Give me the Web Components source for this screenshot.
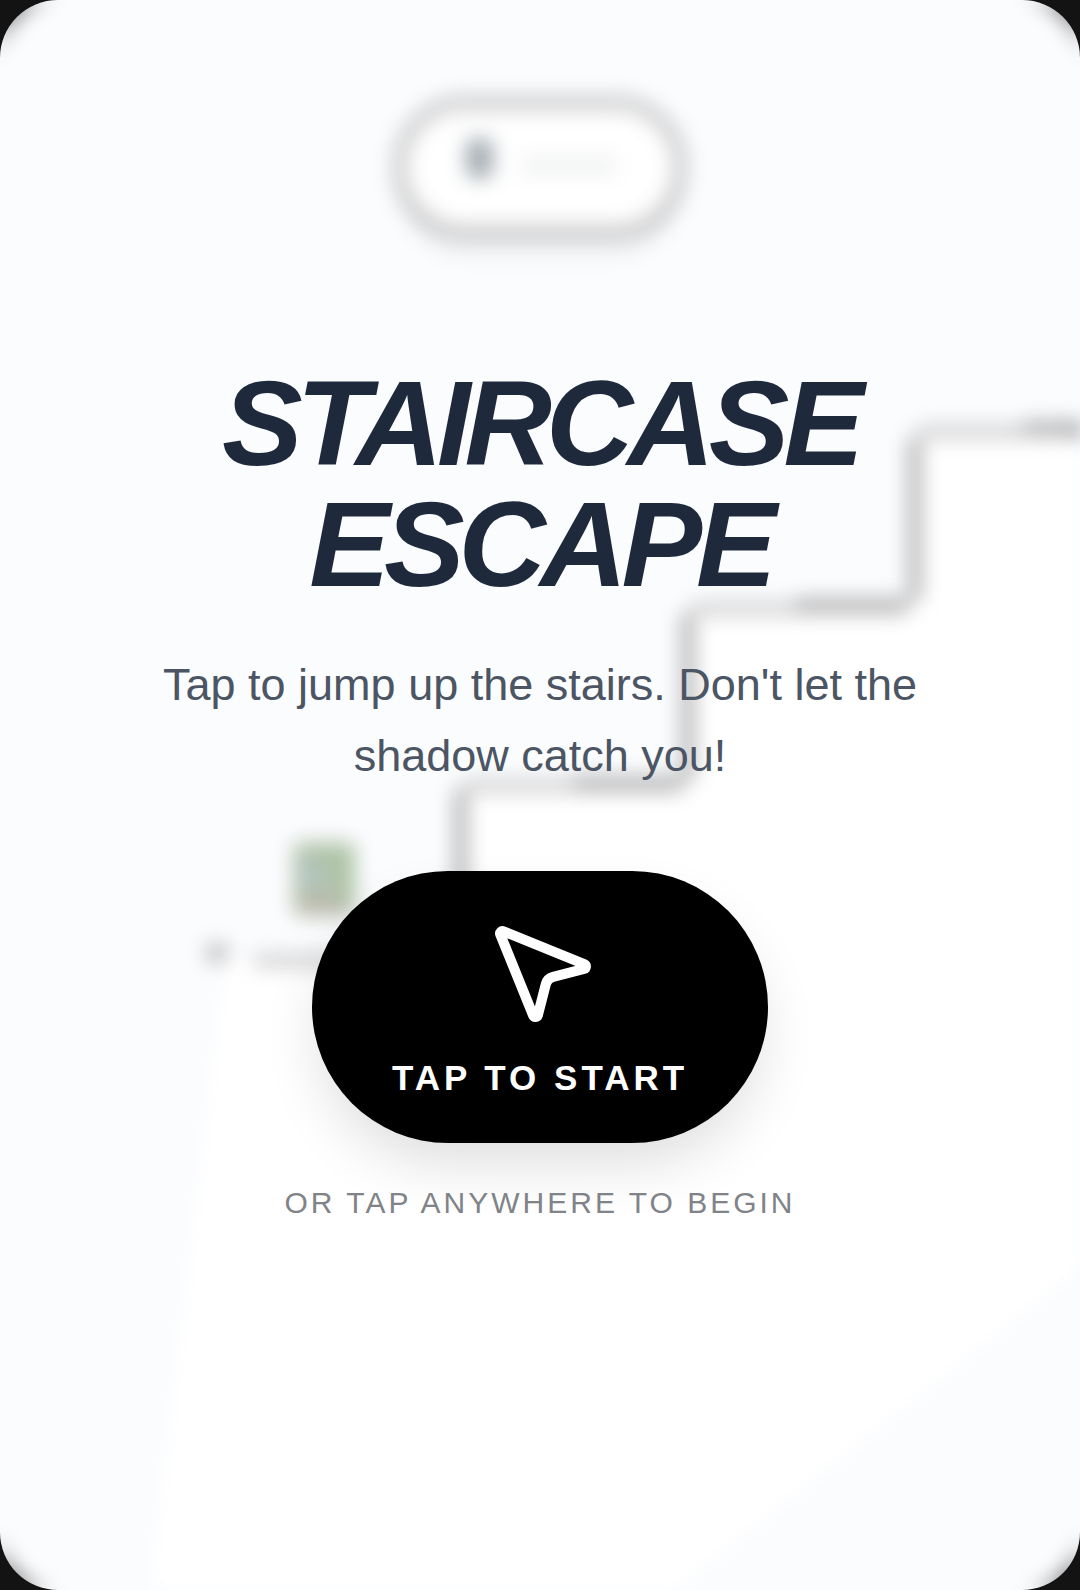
<!DOCTYPE html>
<html lang="en">
<head>
<meta charset="utf-8">
<meta name="viewport" content="width=device-width, initial-scale=1">
<title>Staircase Escape</title>
<style>
html, body {
    margin: 0;
    min-height: 100%;
    background: #131313;
    font-family: "Liberation Sans", Arial, sans-serif;
}
</style>
</head>
<body>

<stair-game>
    <stair-scene slot="scene"></stair-scene>
    <start-screen>
        <span slot="title">Staircase Escape</span>
        <span slot="text">Tap to jump up the stairs. Don't let the shadow catch you!</span>
        <start-button slot="action">Tap to start</start-button>
        <span slot="hint">Or tap anywhere to begin</span>
    </start-screen>
</stair-game>

<script>
// rounded game frame, the scene lies behind the default slot
customElements.define('stair-game', class extends HTMLElement {
    constructor() {
        super();
        let shadowRoot = this.attachShadow({ mode: 'open' });
        shadowRoot.innerHTML = `
        <style>
        :host {
            position: relative;
            display: grid;
            min-height: 100vh;
            overflow: hidden;
            border-radius: 58px;
            background: #fbfcfe;
        }
        #scene {
            position: absolute;
            inset: 0;
        }
        main {
            position: relative;
            display: grid;
        }
        </style>
        <div id=scene><slot name=scene></slot></div>
        <main><slot></slot></main>
        `;
    }
});

// the paused game: score pill, stairs and player, out of focus
customElements.define('stair-scene', class extends HTMLElement {
    constructor() {
        super();
        let shadowRoot = this.attachShadow({ mode: 'open' });
        shadowRoot.innerHTML = `
        <style>
        :host {
            display: block;
            height: 100%;
        }
        #blur {
            position: relative;
            height: 100%;
            overflow: hidden;
            filter: blur(10px);
        }
        /* dark corners of the frame bleed into the blur */
        #blur::after {
            content: "";
            position: absolute;
            inset: 0;
            border-radius: 60px;
            box-shadow: 0 0 0 60px rgb(0 0 0 / .5);
        }
        svg {
            display: block;
            width: 100%;
            height: 100%;
        }
        </style>
        <div id=blur>
            <svg viewBox="0 0 1080 1590" preserveAspectRatio="xMidYMid slice" fill="none" aria-hidden="true">
                <path fill="#fff" d="M226 957H461V783H688V605H915V430H1100V1252L650 1610H148Z"/>
                <g id="stairs" stroke="#000" stroke-width="10">
                    <path stroke-opacity=".4" d="M461 960V790M688 780V614M915 600V438"/>
                    <path stroke-opacity=".2" stroke-width="12" d="M254 961H350M465 786H574M692 609H796M919 432H1024"/>
                    <path stroke-opacity=".33" stroke-width="14" d="M574 784H682M796 606H908M1024 429H1090"/>
                    <path stroke-opacity=".26" stroke-width="18" d="M207 953H227"/>
                    <path stroke-opacity=".7" d="M1074 431H1090"/>
                </g>
                <g id="player">
                    <rect x="293" y="842" width="62" height="74" rx="8" fill="#b6c4ae"/>
                    <rect x="300" y="862" width="22" height="24" fill="#b0c4c4"/>
                    <rect x="298" y="894" width="44" height="20" fill="#b9b8ab"/>
                    <rect x="312" y="848" width="42" height="16" fill="#acc3a4"/>
                    <rect x="334" y="848" width="20" height="48" fill="#acc3a4"/>
                </g>
                <g id="score">
                    <rect x="400" y="116" width="280" height="142" rx="68" fill="#000" fill-opacity=".04"/>
                    <rect x="400" y="103" width="280" height="129" rx="64" fill="#fff"/>
                    <rect x="400" y="103" width="280" height="129" rx="64" stroke="#000" stroke-opacity=".2" stroke-width="14"/>
                    <rect x="466" y="138" width="27" height="41" rx="10" fill="#a3abb1"/>
                    <rect x="522" y="156" width="94" height="20" fill="#f2f3f4"/>
                </g>
            </svg>
        </div>
        `;
    }
});

customElements.define('start-screen', class extends HTMLElement {
    constructor() {
        super();
        let shadowRoot = this.attachShadow({ mode: 'open' });
        shadowRoot.innerHTML = `
        <style>
        :host {
            display: flex;
            flex-direction: column;
            align-items: center;
            justify-content: center;
            box-sizing: border-box;
            padding: 60px 60px 64px;
            text-align: center;
        }
        h1, p {
            margin: 0;
        }
        h1 {
            max-width: 806px;
            margin-bottom: 44px;
            font-size: 121px;
            line-height: 121px;
            font-weight: 900;
            font-style: italic;
            letter-spacing: -6px;
            text-transform: uppercase;
            color: #1e293b;
        }
        #text {
            max-width: 806px;
            margin-bottom: 80px;
            font-size: 45px;
            line-height: 71px;
            color: #4b5563;
        }
        #hint {
            margin-top: 40px;
            font-size: 30px;
            line-height: 40px;
            letter-spacing: 3px;
            text-transform: uppercase;
            color: #808388;
        }
        </style>
        <h1><slot name=title></slot></h1>
        <p id=text><slot name=text></slot></p>
        <slot name=action></slot>
        <p id=hint><slot name=hint></slot></p>
        `;
    }
});

customElements.define('start-button', class extends HTMLElement {
    constructor() {
        super();
        let shadowRoot = this.attachShadow({ mode: 'open' });
        shadowRoot.innerHTML = `
        <style>
        :host {
            display: block;
        }
        button {
            display: flex;
            flex-direction: column;
            align-items: center;
            gap: 21px;
            padding: 40px 80px;
            border: 0;
            border-radius: 136px;
            background: #000;
            color: #fff;
            font: bold 35px/50px "Liberation Sans", Arial, sans-serif;
            letter-spacing: 4px;
            text-transform: uppercase;
            box-shadow: 0 28px 60px -10px rgb(0 0 0 / .14);
            cursor: pointer;
        }
        svg {
            width: 121px;
            height: 121px;
        }
        </style>
        <button type=button>
            <svg viewBox="0 0 24 24" fill="none" stroke="currentColor" stroke-width="2" stroke-linecap="round" stroke-linejoin="round" aria-hidden="true">
                <path d="M4.037 4.688a.495.495 0 0 1 .651-.651l16 6.5a.5.5 0 0 1-.063.947l-6.124 1.58a2 2 0 0 0-1.438 1.435l-1.579 6.126a.5.5 0 0 1-.947.063z"/>
            </svg>
            <span><slot></slot></span>
        </button>
        `;
    }
});
</script>
</body>
</html>
